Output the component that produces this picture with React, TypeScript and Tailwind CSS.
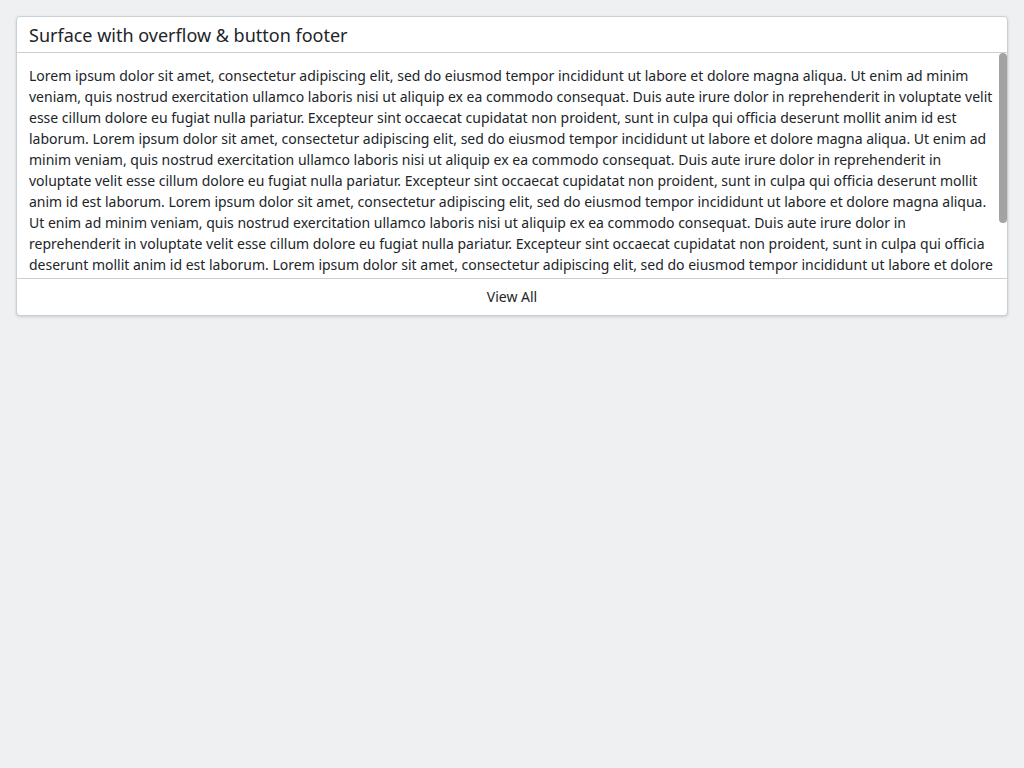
import React from "react";

const LOREM =
  "Lorem ipsum dolor sit amet, consectetur adipiscing elit, sed do eiusmod tempor incididunt ut labore et dolore magna aliqua. Ut enim ad minim veniam, quis nostrud exercitation ullamco laboris nisi ut aliquip ex ea commodo consequat. Duis aute irure dolor in reprehenderit in voluptate velit esse cillum dolore eu fugiat nulla pariatur. Excepteur sint occaecat cupidatat non proident, sunt in culpa qui officia deserunt mollit anim id est laborum.";

export default function App() {
  const text = [LOREM, LOREM, LOREM, LOREM].join(" ");
  return (
    <div
      className="min-h-screen w-full bg-[#eff0f2] p-4 text-[#212529]"
      style={{ fontFamily: '"Noto Sans", "Open Sans", sans-serif' }}
    >
      <div className="flex flex-col rounded border border-[#c9d0d5] bg-white shadow-[0_1px_3px_rgba(0,0,0,0.15)]">
        <div className="flex h-[36px] items-center border-b border-[#c9d0d5] px-3 text-[18px] leading-none">
          Surface with overflow &amp; button footer
        </div>
        <div className="relative h-[225px]">
          <div className="h-full overflow-hidden py-3 pl-3 pr-2 text-[14px] leading-[21px]">
            {text}
          </div>
          <div className="absolute right-0 top-0 h-[170px] w-2 rounded-full bg-[#a3a3a3]" />
        </div>
        <button className="flex h-[37px] items-center justify-center border-t border-[#c9d0d5] pb-px text-[14px] leading-[21px] text-[#212529]">
          View All
        </button>
      </div>
    </div>
  );
}
